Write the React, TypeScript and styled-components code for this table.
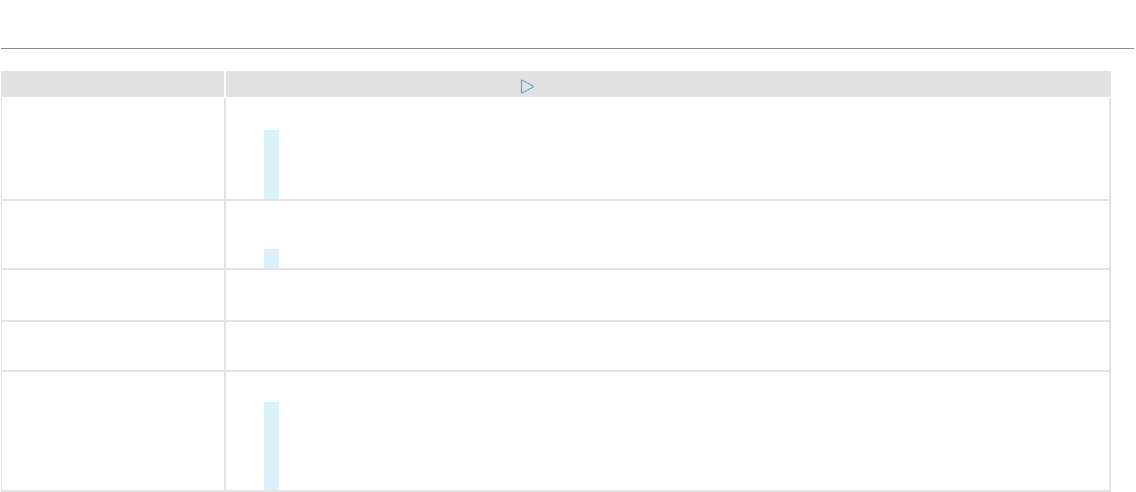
import React from "react";
import styled, { createGlobalStyle } from "styled-components";

const Global = createGlobalStyle`
  html, body { margin: 0; padding: 0; background: #ffffff; }
  body { font-family: "Liberation Sans", Arial, sans-serif; }
`;

const Page = styled.div`
  width: 1136px;
  height: 492px;
  overflow: hidden;
  padding-top: 48px;
  box-sizing: border-box;
`;

const Rule = styled.div`
  height: 1px;
  margin: 0 2px 0 1px;
  background: #8c8c8c;
`;

const Table = styled.div`
  margin: 22px 0 0 1px;
  width: 1110px;
  display: flex;
  flex-direction: column;
`;

const HeaderRow = styled.div`
  display: grid;
  grid-template-columns: 223px 885px;
  column-gap: 2px;
  height: 26px;
`;

const HeaderCell = styled.div`
  background: #e1e1e1;
  display: flex;
  align-items: flex-start;
`;

const PlayCell = styled(HeaderCell)`
  padding: 8px 0 0 295px;
`;

const Body = styled.div`
  margin-top: 1px;
  display: flex;
  flex-direction: column;
`;

const Row = styled.div<{ $h: number }>`
  display: grid;
  grid-template-columns: 224px 883px;
  height: ${(p) => p.$h}px;
  border-left: 1px solid #e3e3e3;
  border-right: 2px solid #e3e3e3;
  border-bottom: 2px solid #e3e3e3;
`;

const LabelCell = styled.div`
  border-right: 2px solid #e3e3e3;
`;

const TrackCell = styled.div`
  display: flex;
  align-items: flex-end;
  padding-left: 38px;
`;

const Bar = styled.div<{ $h: number }>`
  width: 15px;
  height: ${(p) => p.$h}px;
  background: #d9f1fb;
`;

const rows = [
  { h: 101, bar: 69 },
  { h: 67, bar: 19 },
  { h: 50, bar: 0 },
  { h: 48, bar: 0 },
  { h: 118, bar: 88 },
];

export default function App() {
  return (
    <Page>
      <Global />
      <Rule />
      <Table>
        <HeaderRow>
          <HeaderCell />
          <PlayCell>
            <svg width="14" height="15" viewBox="0 0 14 15" aria-label="play">
              <path
                d="M0.5 0.8 L13 7.5 L0.5 14.2 Z"
                fill="none"
                stroke="#4f9bc6"
                strokeWidth="1"
                strokeLinejoin="round"
              />
            </svg>
          </PlayCell>
        </HeaderRow>
        <Body>
          {rows.map((r, i) => (
            <Row key={i} $h={r.h}>
              <LabelCell />
              <TrackCell>{r.bar > 0 && <Bar $h={r.bar} />}</TrackCell>
            </Row>
          ))}
        </Body>
      </Table>
    </Page>
  );
}
